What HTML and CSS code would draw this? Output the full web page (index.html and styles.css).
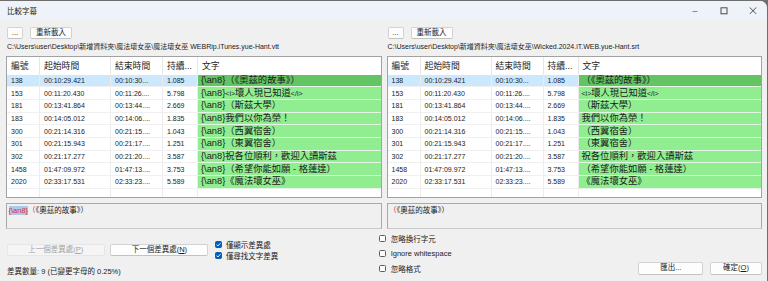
FILE: index.html
```html
<!DOCTYPE html>
<html lang="zh-Hant">
<head>
    <meta charset="UTF-8">
    <title>比較字幕</title>
    <link rel="stylesheet" href="styles.css">
</head>
<body>
    <div class="window">
        <div class="titlebar">
            <span class="title">比較字幕</span>
            <div class="controls">
                <span class="ctrl"><svg width="10" height="10" viewBox="0 0 10 10"><path d="M2.5 5.5h5" stroke="#8a8a8a" stroke-width="1"/></svg></span>
                <span class="ctrl"><svg width="10" height="10" viewBox="0 0 10 10"><rect x="2" y="1.8" width="6" height="6" fill="none" stroke="#3a3a3a" stroke-width="0.9"/></svg></span>
                <span class="ctrl"><svg width="10" height="10" viewBox="0 0 10 10"><path d="M1.8 1.5l6.4 6.4M8.2 1.5l-6.4 6.4" stroke="#3a3a3a" stroke-width="0.9"/></svg></span>
            </div>
        </div>

        <div class="content">
            <div class="panes">
                <!-- left subtitle -->
                <div class="pane">
                    <div class="toolbar">
                        <button class="btn btn-dots">...</button>
                        <button class="btn btn-reload">重新載入</button>
                    </div>
                    <div class="path">C:\Users\user\Desktop\新增資料夾\魔法壞女巫\魔法壞女巫 WEBRip.iTunes.yue-Hant.vtt</div>
                    <div class="grid">
                        <table>
                            <colgroup><col class="c-no"><col class="c-start"><col class="c-end"><col class="c-dur"><col></colgroup>
                            <tr class="head"><th>編號</th><th>起始時間</th><th>結束時間</th><th>持續...</th><th>文字</th></tr>
                            <tr class="sel"><td>138</td><td>00:10:29.421</td><td>00:10:30...</td><td>1.085</td><td class="txt">{\an8}（《奧茲的故事》）</td></tr>
                            <tr><td>153</td><td>00:11:20.430</td><td>00:11:26....</td><td>5.798</td><td class="txt">{\an8}<span class="tag">&lt;i&gt;</span>壞人現已知道<span class="tag">&lt;/i&gt;</span></td></tr>
                            <tr><td>181</td><td>00:13:41.864</td><td>00:13:44....</td><td>2.669</td><td class="txt">{\an8}（斯茲大學）</td></tr>
                            <tr><td>183</td><td>00:14:05.012</td><td>00:14:06....</td><td>1.835</td><td class="txt">{\an8}我們以你為榮！</td></tr>
                            <tr><td>300</td><td>00:21:14.316</td><td>00:21:15....</td><td>1.043</td><td class="txt">{\an8}（西翼宿舍）</td></tr>
                            <tr><td>301</td><td>00:21:15.943</td><td>00:21:17....</td><td>1.251</td><td class="txt">{\an8}（東翼宿舍）</td></tr>
                            <tr><td>302</td><td>00:21:17.277</td><td>00:21:20....</td><td>3.587</td><td class="txt">{\an8}祝各位順利，歡迎入讀斯茲</td></tr>
                            <tr><td>1458</td><td>01:47:09.972</td><td>01:47:13....</td><td>3.753</td><td class="txt">{\an8}（希望你能如願 - 格蓮達）</td></tr>
                            <tr><td>2020</td><td>02:33:17.531</td><td>02:33:23....</td><td>5.589</td><td class="txt">{\an8}《魔法壞女巫》</td></tr>
                            <tr class="filler"><td></td><td></td><td></td><td></td><td></td></tr>
                        </table>
                    </div>
                    <div class="preview"><span class="diff hl">{\an8}</span><span class="diff">（</span>《奧茲的故事》）</div>
                </div>

                <!-- right subtitle -->
                <div class="pane">
                    <div class="toolbar">
                        <button class="btn btn-dots">...</button>
                        <button class="btn btn-reload">重新載入</button>
                    </div>
                    <div class="path">C:\Users\user\Desktop\新增資料夾\魔法壞女巫\Wicked.2024.iT.WEB.yue-Hant.srt</div>
                    <div class="grid">
                        <table>
                            <colgroup><col class="c-no"><col class="c-start"><col class="c-end"><col class="c-dur"><col></colgroup>
                            <tr class="head"><th>編號</th><th>起始時間</th><th>結束時間</th><th>持續...</th><th>文字</th></tr>
                            <tr class="sel"><td>138</td><td>00:10:29.421</td><td>00:10:30...</td><td>1.085</td><td class="txt">（《奧茲的故事》）</td></tr>
                            <tr><td>153</td><td>00:11:20.430</td><td>00:11:26....</td><td>5.798</td><td class="txt"><span class="tag">&lt;i&gt;</span>壞人現已知道<span class="tag">&lt;/i&gt;</span></td></tr>
                            <tr><td>181</td><td>00:13:41.864</td><td>00:13:44....</td><td>2.669</td><td class="txt">（斯茲大學）</td></tr>
                            <tr><td>183</td><td>00:14:05.012</td><td>00:14:06....</td><td>1.835</td><td class="txt">我們以你為榮！</td></tr>
                            <tr><td>300</td><td>00:21:14.316</td><td>00:21:15....</td><td>1.043</td><td class="txt">（西翼宿舍）</td></tr>
                            <tr><td>301</td><td>00:21:15.943</td><td>00:21:17....</td><td>1.251</td><td class="txt">（東翼宿舍）</td></tr>
                            <tr><td>302</td><td>00:21:17.277</td><td>00:21:20....</td><td>3.587</td><td class="txt">祝各位順利，歡迎入讀斯茲</td></tr>
                            <tr><td>1458</td><td>01:47:09.972</td><td>01:47:13....</td><td>3.753</td><td class="txt">（希望你能如願 - 格蓮達）</td></tr>
                            <tr><td>2020</td><td>02:33:17.531</td><td>02:33:23....</td><td>5.589</td><td class="txt">《魔法壞女巫》</td></tr>
                            <tr class="filler"><td></td><td></td><td></td><td></td><td></td></tr>
                        </table>
                    </div>
                    <div class="preview"><span class="diff">（</span>《奧茲的故事》）</div>
                </div>
            </div>

            <div class="footer">
                <div class="footer-left">
                    <div class="nav-row">
                        <button class="btn btn-nav" disabled>上一個差異處(<u>P</u>)</button>
                        <button class="btn btn-nav">下一個差異處(<u>N</u>)</button>
                        <div class="checks">
                            <label class="check"><span class="box on"><svg width="7" height="7" viewBox="0 0 7 7"><path d="M1.5 3.6l1.4 1.4 2.6-2.9" fill="none" stroke="#fff" stroke-width="0.9"/></svg></span>僅顯示差異處</label>
                            <label class="check"><span class="box on"><svg width="7" height="7" viewBox="0 0 7 7"><path d="M1.5 3.6l1.4 1.4 2.6-2.9" fill="none" stroke="#fff" stroke-width="0.9"/></svg></span>僅尋找文字差異</label>
                        </div>
                    </div>
                    <div class="status">差異數量: 9 (已變更字母的 0.25%)</div>
                </div>
                <div class="footer-right">
                    <div class="options">
                        <label class="check opt"><span class="box"></span>忽略換行字元</label>
                        <label class="check opt"><span class="box"></span>Ignore whitespace</label>
                        <label class="check opt"><span class="box"></span>忽略格式</label>
                    </div>
                    <div class="actions">
                        <button class="btn btn-export">匯出...</button>
                        <button class="btn btn-ok">確定(<u>O</u>)</button>
                    </div>
                </div>
            </div>
        </div>
    </div>
</body>
</html>
```

FILE: styles.css
```css
html, body {
    margin: 0;
    height: 100%;
}

body {
    background: #6e6e6e;
    font-family: "Liberation Sans", "Noto Sans CJK TC", sans-serif;
    font-size: 7px;
    color: #1b1b1b;
    overflow: hidden;
}

.window {
    margin: 1px 1px 0 0;
    height: 280px;
    background: #f0f0f0;
    border-top-right-radius: 7px;
    overflow: hidden;
    display: flex;
    flex-direction: column;
}

/* title bar */
.titlebar {
    height: 19px;
    flex: none;
    background: #eef3f9;
    display: flex;
    align-items: center;
    padding-left: 7px;
}

.title {
    flex: 1;
    font-size: 7.5px;
}

.controls {
    display: flex;
}

.ctrl {
    width: 29px;
    height: 19px;
    display: flex;
    align-items: center;
    justify-content: center;
}

.ctrl svg {
    display: block;
}

/* content */
.content {
    flex: 1;
    display: flex;
    flex-direction: column;
    padding: 0 5px 0 6px;
}

.panes {
    display: grid;
    grid-template-columns: 1fr 1fr;
    column-gap: 5px;
}

.pane {
    display: flex;
    flex-direction: column;
    min-width: 0;
}

.btn {
    font-family: inherit;
    font-size: 7.5px;
    color: #1b1b1b;
    background: #fdfdfd;
    border: 1px solid #d3d3d3;
    border-bottom-color: #c2c2c2;
    border-radius: 2px;
    padding: 0;
    margin: 0;
    line-height: 10px;
}

.btn u {
    text-decoration: underline;
}

.toolbar {
    display: flex;
    gap: 7px;
    padding: 6.5px 0 0 1px;
}

.btn-dots {
    width: 16px;
    height: 12px;
}

.btn-reload {
    width: 42px;
    height: 12px;
}

.path {
    margin-top: 3.5px;
    line-height: 10px;
    padding-left: 1px;
    white-space: nowrap;
    overflow: hidden;
}

/* grid */
.grid {
    margin-top: 4px;
    height: 142px;
    box-sizing: border-box;
    border: 1px solid #a2a2a2;
    background: #fff;
    overflow: hidden;
}

.grid table {
    width: 100%;
    table-layout: fixed;
    border-collapse: separate;
    border-spacing: 0;
}

.c-no { width: 33px; }
.c-start { width: 71px; }
.c-end { width: 52px; }
.c-dur { width: 35px; }

.grid th {
    height: 17.5px;
    padding: 0 0 0 4px;
    font-weight: normal;
    font-size: 8.8px;
    text-align: left;
    border-right: 1px solid #e6e6e6;
    white-space: nowrap;
    overflow: hidden;
}

.grid td {
    height: 11.7px;
    padding: 0 0 0 4px;
    line-height: 11px;
    border-right: 1px solid #ececec;
    border-bottom: 1px solid #f0f0f0;
    white-space: nowrap;
    overflow: hidden;
}

.grid th:last-child,
.grid td:last-child {
    border-right: none;
}

.grid td.txt {
    font-size: 9.3px;
    background: #90ee90;
    border-bottom-color: #e4f7e4;
    padding-left: 3px;
}

.grid .tag {
    font-size: 7px;
}

.grid tr.sel td {
    background: #cce8ff;
}

.grid tr.sel td.txt {
    background: #62c462;
}

.grid tr.filler td {
    height: 8px;
    border-bottom: none;
}

/* preview */
.preview {
    margin-top: 4.5px;
    height: 26.5px;
    box-sizing: border-box;
    border: 1px solid #a9a9a9;
    border-bottom-color: #c8c8c8;
    background: #f0f0f0;
    padding: 0.5px 0 0 1.5px;
    font-size: 7.5px;
    line-height: 13px;
    white-space: nowrap;
    overflow: hidden;
}

.diff {
    color: #d93232;
}

.hl {
    background: #a8cbec;
}

/* footer */
.footer {
    flex: 1;
    display: flex;
}

.footer-left {
    width: 373px;
    flex: none;
    padding-top: 9.25px;
}

.nav-row {
    display: flex;
    align-items: center;
    height: 23px;
}

.btn-nav {
    width: 98px;
    height: 12.3px;
    margin-left: 0.7px;
    margin-right: 5px;
}

.btn-nav:disabled {
    background: #f5f5f5;
    border-color: #e6e6e6;
    color: #a3a3a3;
}

.checks {
    margin-left: 1.5px;
    display: flex;
    flex-direction: column;
}

.check {
    display: flex;
    align-items: center;
    gap: 4px;
    height: 11.5px;
    font-size: 7.5px;
    white-space: nowrap;
}

.box {
    width: 7px;
    height: 7px;
    box-sizing: border-box;
    border: 1px solid #5e5e5e;
    border-radius: 1.5px;
    background: #fbfbfb;
    display: flex;
    align-items: center;
    justify-content: center;
}

.box.on {
    background: #005fb8;
    border-color: #005fb8;
}

.box svg {
    display: block;
    flex: none;
}

.status {
    margin-top: 5.5px;
    padding-left: 1px;
    line-height: 10px;
    font-size: 7.5px;
}

.footer-right {
    flex: 1;
    display: flex;
    justify-content: space-between;
}

.options {
    padding-top: 2.6px;
    display: flex;
    flex-direction: column;
}

.check.opt {
    height: 14.7px;
    gap: 4.7px;
}

.actions {
    align-self: flex-end;
    display: flex;
    gap: 6.7px;
    margin-bottom: 6px;
}

.btn-export {
    width: 65px;
    height: 13.3px;
}

.btn-ok {
    width: 52px;
    height: 13.3px;
}
```
